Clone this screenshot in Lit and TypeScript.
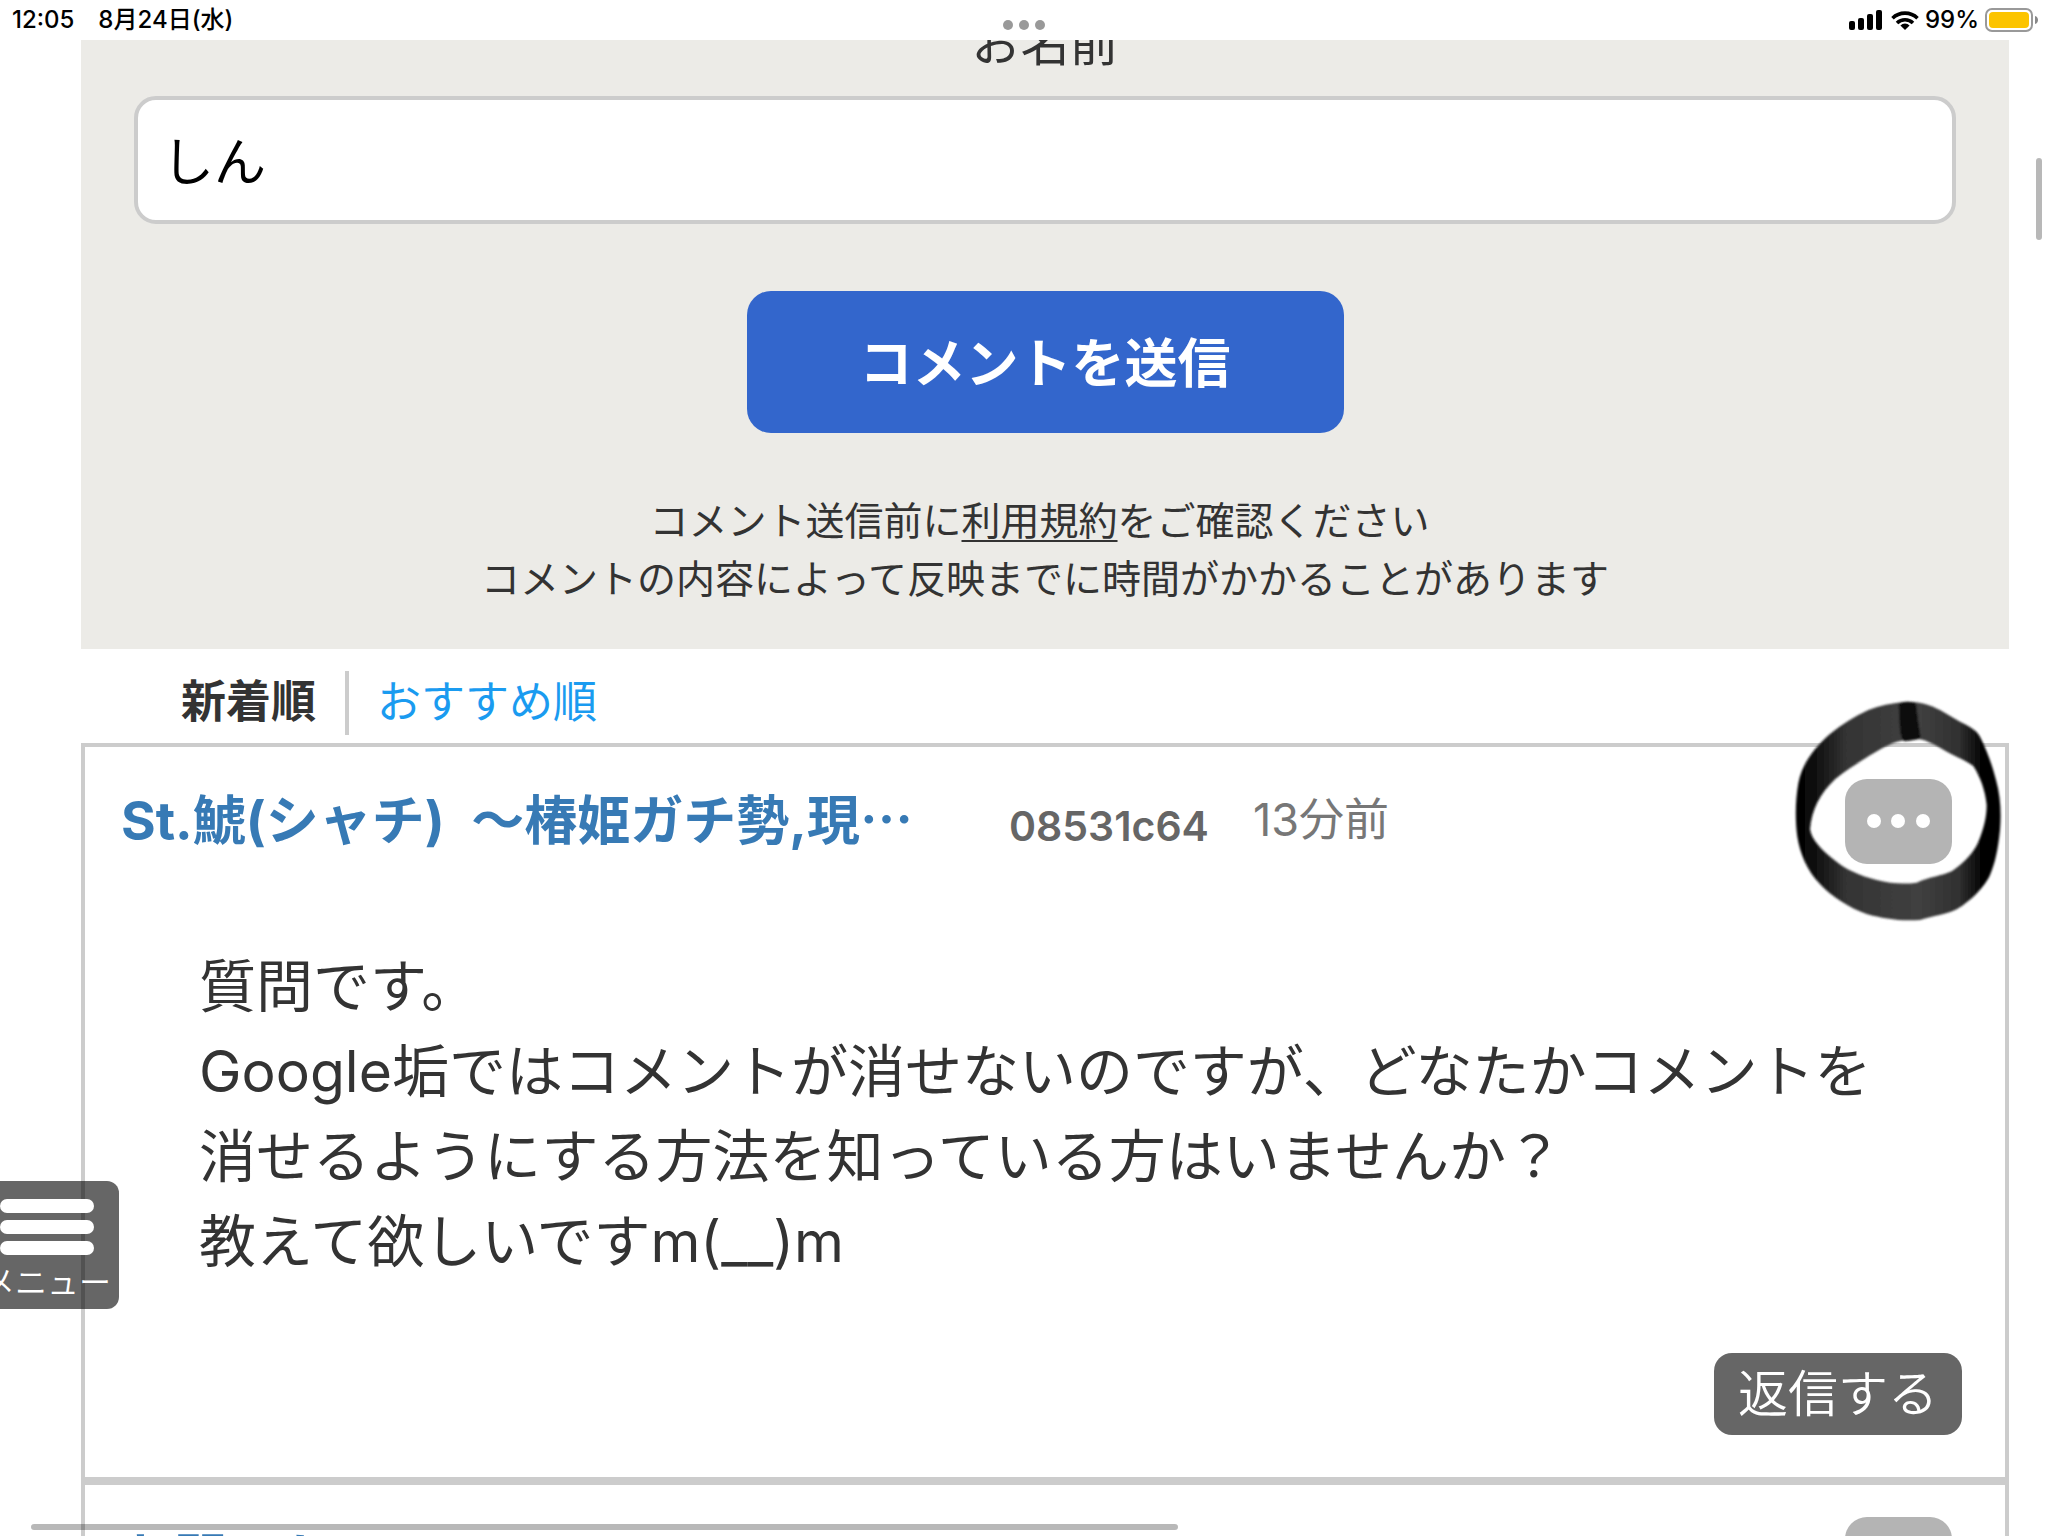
import { LitElement, html, css } from "lit";
import { customElement } from "lit/decorators.js";

@customElement("status-bar")
class StatusBar extends LitElement {
  static styles = css`
    :host {
      display: block;
      color: #000;
      background: #fff;
    }
    .bar {
      display: grid;
      grid-template-columns: 1fr auto 1fr;
      height: 40px;
      padding: 0 10px;
      box-sizing: border-box;
      font-size: 24px;
      line-height: 40px;
      font-weight: 500;
    }
    .left {
      display: flex;
      gap: 24px;
      padding-left: 2px;
    }
    .right {
      display: flex;
      justify-content: flex-end;
      align-items: center;
      gap: 6px;
    }
    .dots {
      margin-top: 20px;
    }
    svg {
      display: block;
    }
  `;

  render() {
    return html`
      <header class="bar">
        <div class="left"><span>12:05</span><span>8月24日(水)</span></div>
        <svg class="dots" width="42" height="10" viewBox="0 0 42 10" fill="#999">
          <circle cx="5" cy="5" r="5" />
          <circle cx="21" cy="5" r="5" />
          <circle cx="37" cy="5" r="5" />
        </svg>
        <div class="right">
          <svg width="36" height="20" viewBox="0 0 36 20">
            <rect x="0" y="11" width="6" height="9" rx="2" />
            <rect x="9" y="8" width="6" height="12" rx="2" />
            <rect x="18" y="4" width="6" height="16" rx="2" />
            <rect x="27" y="0" width="6" height="20" rx="2" />
          </svg>
          <svg width="28" height="20" viewBox="0 0 28 20" fill="none" stroke="#000" stroke-width="3.6">
            <path d="M1.500 8.200a18 18 0 0 1 25 0" />
            <path d="M6 13a11.500 11.500 0 0 1 16 0" />
            <path d="M14 20l-4.600-4.600a6.500 6.500 0 0 1 9.200 0z" fill="#000" stroke="none" />
          </svg>
          <span>99%</span>
          <svg width="53" height="24" viewBox="0 0 53 24">
            <rect x="1" y="1" width="46" height="22" rx="6" fill="#fff" stroke="#999" stroke-width="2" />
            <rect x="4" y="4" width="40" height="16" rx="4" fill="#fcc400" />
            <path d="M50 8c4 1 4 7 0 8z" fill="#888" />
          </svg>
        </div>
      </header>
    `;
  }
}

@customElement("comment-form")
class CommentForm extends LitElement {
  static styles = css`
    :host {
      display: block;
      overflow: hidden;
      background: #ecebe7;
    }
    .form {
      display: flex;
      flex-direction: column;
      align-items: center;
      padding: 0 53px 41px;
    }
    .label {
      margin-top: -20px;
      font-size: 49px;
      line-height: 48px;
    }
    .name {
      align-self: stretch;
      box-sizing: border-box;
      height: 128px;
      margin: 28px 0 67px;
      padding: 0 24px 4px;
      border: 4px solid #ccc;
      border-radius: 22px;
      background: #fff;
      color: #000;
      font-family: inherit;
      font-size: 52px;
    }
    .send {
      padding: 4px 113px 0;
      border: 0;
      border-radius: 24px;
      background: #36c;
      color: #fff;
      font-family: inherit;
      font-size: 53px;
      line-height: 138px;
      font-weight: 700;
    }
    .note {
      margin: 59px 0 0;
      font-size: 39px;
      line-height: 58px;
      text-align: center;
    }
    .terms {
      color: inherit;
      text-decoration: underline;
      text-decoration-thickness: 2px;
      text-underline-offset: 5px;
    }
  `;

  render() {
    return html`
      <form class="form" @submit=${(e: Event) => e.preventDefault()}>
        <label class="label" for="name">お名前</label>
        <input class="name" id="name" type="text" value="しん" />
        <button class="send" type="submit">コメントを送信</button>
        <p class="note">
          コメント送信前に<a class="terms" href="#terms">利用規約</a>をご確認ください&nbsp;<br />コメントの内容によって反映までに時間がかかることがあります
        </p>
      </form>
    `;
  }
}

@customElement("sort-tabs")
class SortTabs extends LitElement {
  static styles = css`
    :host {
      display: block;
    }
    .tabs {
      display: flex;
      padding: 22px 100px 8px;
      line-height: 62px;
    }
    .tab {
      text-decoration: none;
      height: 64px;
    }
    .current {
      padding-right: 29px;
      border-right: 4px solid #ccc;
      color: #333;
      font-size: 45px;
      font-weight: 700;
    }
    .other {
      padding-left: 28px;
      color: #1a9bf0;
      font-size: 44px;
    }
  `;

  render() {
    return html`
      <nav class="tabs">
        <a class="tab current" href="#new">新着順</a>
        <a class="tab other" href="#recommended">おすすめ順</a>
      </nav>
    `;
  }
}

@customElement("comment-card")
class CommentCard extends LitElement {
  static properties = {
    author: { type: String },
    uid: { type: String },
    time: { type: String },
    lines: { type: Array },
    circled: { type: Boolean },
  };

  declare author: string;
  declare uid: string;
  declare time: string;
  declare lines: string[];
  declare circled: boolean;

  static styles = css`
    :host {
      display: block;
      border: 4px solid #ccc;
      background: #fff;
    }
    .head {
      display: flex;
      align-items: flex-start;
      padding: 32px 53px 0 36px;
    }
    .author {
      flex: none;
      width: 888px;
      color: #377ab5;
      font-size: 53px;
      line-height: 84px;
      font-weight: 700;
      text-decoration: none;
      white-space: nowrap;
    }
    .uid {
      color: #666;
      font-size: 41px;
      line-height: 94px;
      font-weight: 600;
    }
    .time {
      margin-left: 44px;
      color: #777;
      font-size: 45px;
      line-height: 82px;
    }
    .menu {
      position: relative;
      margin-left: auto;
    }
    .more {
      display: block;
      width: 107px;
      height: 85px;
      padding: 0;
      border: 0;
      border-radius: 22px;
      background: #b4b4b4;
    }
    .ring {
      position: absolute;
      left: -85px;
      top: -99px;
      pointer-events: none;
    }
    .body {
      margin: 71px 113px 69px 114px;
      font-size: 57px;
      line-height: 85px;
    }
    .line {
      margin: 0;
    }
    .foot {
      display: flex;
      justify-content: flex-end;
      padding: 0 43px 42px;
    }
    .reply {
      padding: 0 24px;
      border: 0;
      border-radius: 18px;
      background: #666;
      color: #fff;
      font-family: inherit;
      font-size: 50px;
      font-weight: 350;
      line-height: 82px;
    }
  `;

  ring() {
    return html`
      <svg class="ring" width="288" height="260" viewBox="0 0 864 780">
        <defs>
          <linearGradient id="ink" x1="107" x2="722" y1="0" y2="0" gradientUnits="userSpaceOnUse">
            <stop offset="0" stop-color="#000" />
            <stop offset="0.08" stop-color="#0c0c0c" />
            <stop offset="0.25" stop-color="#343434" />
            <stop offset="0.6" stop-color="#404040" />
            <stop offset="0.8" stop-color="#303030" />
            <stop offset="0.9" stop-color="#060606" />
            <stop offset="1" stop-color="#000" />
          </linearGradient>
          <filter id="soft"><feGaussianBlur stdDeviation="3" /></filter>
        </defs>
        <g filter="url(#soft)">
          <path
            fill="url(#ink)"
            fill-rule="evenodd"
            d="M430 66C475 62 510 75 540 90L600 125C630 140 650 150 660 170C680 210 695 250 708 300C722 350 724 400 720 450C714 510 705 550 690 585C675 620 630 665 590 688C560 703 520 708 480 720C420 724 370 716 320 702C270 685 215 650 180 612C140 570 120 520 112 470C105 420 106 360 115 310C125 255 160 205 210 162C250 130 280 112 325 90C360 76 395 70 430 66Z
               M440 180C400 184 370 202 330 226C300 246 260 268 225 298C180 340 155 390 150 448C155 480 185 510 220 538C255 568 300 588 350 600C390 610 430 614 470 608C510 590 545 588 575 574C610 550 640 520 655 486C672 445 680 410 680 375C676 330 660 290 640 258C610 236 580 228 545 206C520 192 500 182 480 178Z"
          />
          <path d="M416 72Q440 60 468 70Q474 125 482 172Q476 180 434 184Q424 180 420 150Z" fill="#080808" />
        </g>
      </svg>
    `;
  }

  render() {
    return html`
      <article>
        <div class="head">
          <a class="author" href="#user">${this.author}</a>
          <span class="uid">${this.uid}</span>
          <span class="time">${this.time}</span>
          <div class="menu">
            <button class="more" type="button" aria-label="メニューを開く">
              <svg width="107" height="85" viewBox="0 0 107 85" fill="#fff">
                <circle cx="29" cy="42" r="7" />
                <circle cx="53" cy="42" r="7" />
                <circle cx="78" cy="42" r="7" />
              </svg>
            </button>
            ${this.circled ? this.ring() : ""}
          </div>
        </div>
        <div class="body">${(this.lines ?? []).map((t) => html`<p class="line">${t}</p>`)}</div>
        <div class="foot"><button class="reply" type="button">返信する</button></div>
      </article>
    `;
  }
}

@customElement("app-root")
class AppRoot extends LitElement {
  static styles = css`
    :host {
      display: block;
      position: relative;
      height: 100vh;
      overflow: hidden;
      background: #fff;
      color: #333;
      font-family: Inter, "Noto Sans CJK JP", sans-serif;
    }
    .page {
      padding: 0 39px 0 81px;
    }
    .side {
      position: absolute;
      left: -25px;
      bottom: 227px;
      display: flex;
      flex-direction: column;
      align-items: center;
      gap: 7px;
      width: 144px;
      height: 128px;
      padding: 18px 0 0;
      border: 0;
      border-radius: 12px;
      background: rgba(0, 0, 0, 0.6);
      color: #fff;
      font-family: inherit;
      font-size: 32px;
      line-height: 42px;
      font-weight: 350;
      white-space: nowrap;
    }
    .stripe {
      width: 94px;
      height: 14px;
      border-radius: 7px;
      background: #fff;
    }
    .vbar,
    .hbar {
      position: absolute;
      border-radius: 3px;
      background: rgba(0, 0, 0, 0.28);
    }
    .vbar {
      right: 6px;
      top: 158px;
      width: 6px;
      height: 82px;
    }
    .hbar {
      left: 31px;
      bottom: 6px;
      width: 56%;
      height: 6px;
    }
  `;

  render() {
    return html`
      <status-bar></status-bar>
      <main class="page">
        <comment-form></comment-form>
        <sort-tabs></sort-tabs>
        <comment-card
          circled
          author="St.鯱(シャチ)&ensp;〜椿姫ガチ勢,現⋯"
          uid="08531c64"
          time="13分前"
          .lines=${[
            "質問です。",
            "Google垢ではコメントが消せないのですが、どなたかコメントを消せるようにする方法を知っている方はいませんか？",
            "教えて欲しいですm(__)m",
          ]}
        ></comment-card>
        <comment-card author="お問いち？" uid="" time=""></comment-card>
      </main>
      <button class="side" type="button">
        <span class="stripe"></span><span class="stripe"></span><span class="stripe"></span>
        <span>メニュー</span>
      </button>
      <div class="vbar"></div>
      <div class="hbar"></div>
    `;
  }
}
